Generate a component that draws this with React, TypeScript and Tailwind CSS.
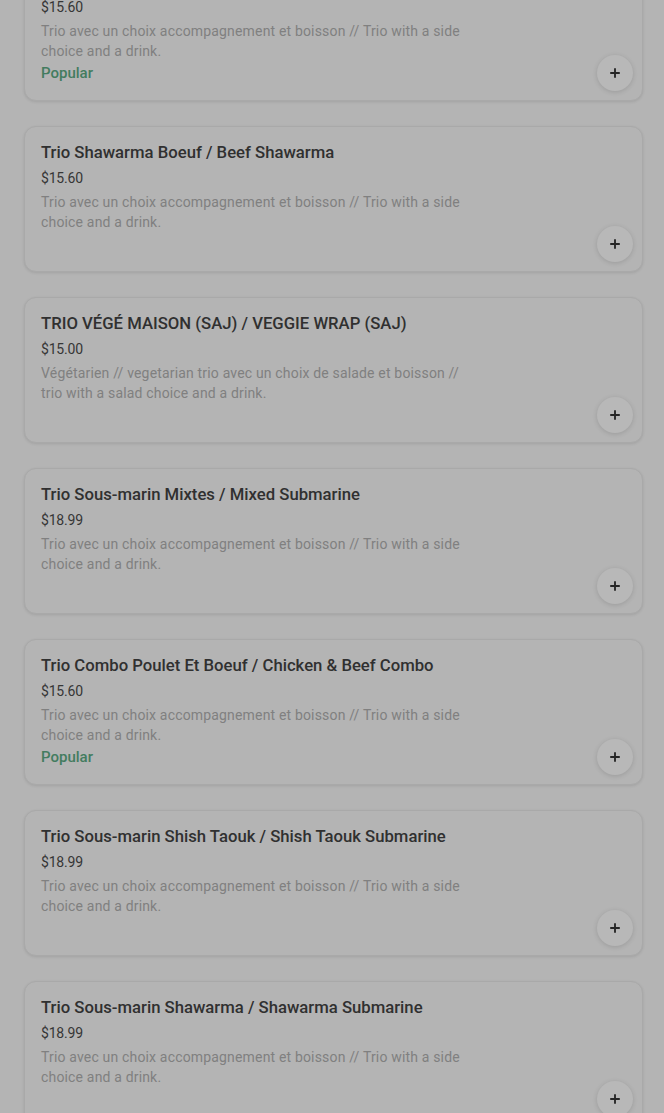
import { FiPlus } from "react-icons/fi";

type Item = {
  name: string;
  price: string;
  desc: string;
  popular?: boolean;
};

const items: Item[] = [
  {
    name: "Trio Shawarma Poulet / Chicken Shawarma",
    price: "$15.60",
    desc: "Trio avec un choix accompagnement et boisson // Trio with a side choice and a drink.",
    popular: true,
  },
  {
    name: "Trio Shawarma Boeuf / Beef Shawarma",
    price: "$15.60",
    desc: "Trio avec un choix accompagnement et boisson // Trio with a side choice and a drink.",
  },
  {
    name: "TRIO VÉGÉ MAISON (SAJ) / VEGGIE WRAP (SAJ)",
    price: "$15.00",
    desc: "Végétarien // vegetarian trio avec un choix de salade et boisson // trio with a salad choice and a drink.",
  },
  {
    name: "Trio Sous-marin Mixtes / Mixed Submarine",
    price: "$18.99",
    desc: "Trio avec un choix accompagnement et boisson // Trio with a side choice and a drink.",
  },
  {
    name: "Trio Combo Poulet Et Boeuf / Chicken & Beef Combo",
    price: "$15.60",
    desc: "Trio avec un choix accompagnement et boisson // Trio with a side choice and a drink.",
    popular: true,
  },
  {
    name: "Trio Sous-marin Shish Taouk / Shish Taouk Submarine",
    price: "$18.99",
    desc: "Trio avec un choix accompagnement et boisson // Trio with a side choice and a drink.",
  },
  {
    name: "Trio Sous-marin Shawarma / Shawarma Submarine",
    price: "$18.99",
    desc: "Trio avec un choix accompagnement et boisson // Trio with a side choice and a drink.",
  },
];

function MenuCard({ item }: { item: Item }) {
  return (
    <div className="flex h-[146px] shrink-0 rounded-xl border border-[#a9a9a9] bg-[#b4b4b4] shadow-[0_1px_3px_rgba(0,0,0,0.1)]">
      {/* Text */}
      <div className="flex-1 pl-4 pt-[14px]">
        <p className="text-[16.7px] leading-6 font-medium text-[#303030]">{item.name}</p>
        <p className="mt-[3px] text-sm leading-5 tracking-[-0.2px] text-[#363636]">{item.price}</p>
        <p className="mt-1 w-[432px] text-sm leading-5 tracking-[0.17px] text-[#808080]">{item.desc}</p>
        {item.popular && (
          <p className="mt-[2px] text-[15px] leading-5 font-medium text-[#437c5f]">Popular</p>
        )}
      </div>

      {/* Add button */}
      <div className="flex items-end pr-[9px] pb-[9px]">
        <button className="flex h-9 w-9 items-center justify-center rounded-full bg-[#b8b8b8] text-[#262626] shadow-[0_1px_5px_rgba(0,0,0,0.14)]">
          <FiPlus className="text-[14px]" strokeWidth={3.2} />
        </button>
      </div>
    </div>
  );
}

export default function App() {
  return (
    <div
      className="h-[1113px] overflow-hidden bg-[#b4b4b4]"
      style={{ fontFamily: "Roboto, 'Liberation Sans', sans-serif" }}
    >
      <div className="-mt-[45px] flex flex-col gap-[25px] pl-6 pr-[21px]">
        {items.map((item) => (
          <MenuCard key={item.name} item={item} />
        ))}
      </div>
    </div>
  );
}
